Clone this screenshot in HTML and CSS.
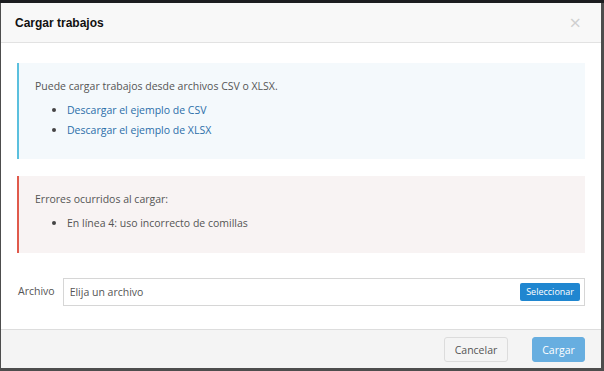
FILE: index.html
```html
<!DOCTYPE html>
<html lang="es">
<head>
  <meta charset="UTF-8">
  <title>Cargar trabajos</title>
  <link rel="stylesheet" href="styles.css">
</head>
<body>
  <div class="modal">
    <div class="modal-header">
      <h4>Cargar trabajos</h4>
      <span class="close">&times;</span>
    </div>

    <div class="modal-body">
      <div class="callout callout-info">
        <p>Puede cargar trabajos desde archivos CSV o XLSX.</p>
        <ul>
          <li><a href="#">Descargar el ejemplo de CSV</a></li>
          <li><a href="#">Descargar el ejemplo de XLSX</a></li>
        </ul>
      </div>

      <div class="callout callout-danger">
        <p>Errores ocurridos al cargar:</p>
        <ul>
          <li>En línea 4: uso incorrecto de comillas</li>
        </ul>
      </div>

      <div class="form-row">
        <label>Archivo</label>
        <div class="file-input">
          <span>Elija un archivo</span>
          <button class="btn-select">Seleccionar</button>
        </div>
      </div>
    </div>

    <div class="modal-footer">
      <button class="btn btn-default">Cancelar</button>
      <button class="btn btn-primary" disabled>Cargar</button>
    </div>
  </div>
</body>
</html>
```

FILE: styles.css
```css
* {
  box-sizing: border-box;
  font-family: 'Open Sans', sans-serif;
}

body {
  margin: 0;
  background: #4d4d4d;
  border-top: 3px solid #1c1d20;
  height: 371px;
  padding: 0 3px 0 1px;
  overflow: hidden;
}

.modal {
  background: white;
  height: 365px;
  display: flex;
  flex-direction: column;
}

.modal-header {
  display: flex;
  justify-content: space-between;
  align-items: center;
  background: #f8f8f8;
  border-bottom: 1px solid #e2e2e2;
  height: 40px;
  padding: 0 20px 0 14px;
}

.modal-header h4 {
  margin: 0;
  font-family: 'Liberation Sans', Arial, sans-serif;
  font-size: 12px;
  font-weight: bold;
  color: #111;
}

.close {
  color: #cfcfcf;
  font-size: 20px;
  line-height: 1;
}

.modal-body {
  flex: 1;
  padding: 20px 16px 0 16px;
}

.callout {
  border-left: 2px solid;
  padding: 15px 16px 15px 16px;
  font-size: 10.5px;
  color: #555;
  margin-bottom: 17px;
}

.callout p {
  margin: 0 0 6px;
  line-height: 16px;
}

.callout ul {
  margin: 0;
  padding-left: 32px;
}

.callout li {
  line-height: 20px;
}

.callout li::marker {
  font-size: 12px;
  color: #444;
}

.callout a {
  color: #2b6ea9;
  text-decoration: none;
}

.callout-info {
  background: #f4f9fc;
  border-color: #5bc0de;
  height: 96px;
}

.callout-danger {
  background: #f8f3f3;
  border-color: #e05a4c;
  height: 77px;
}

.form-row {
  display: flex;
  align-items: center;
  gap: 8px;
  margin-top: 25px;
}

.form-row label {
  font-size: 10.5px;
  color: #555;
  padding-left: 1px;
  margin-top: -3px;
}

.file-input {
  flex: 1;
  display: flex;
  justify-content: space-between;
  align-items: center;
  height: 28px;
  border: 1px solid #d6d6d6;
  padding: 0 4px 0 6px;
  font-size: 10.5px;
  color: #555;
}

.btn-select {
  background: #1f86d0;
  border: none;
  border-radius: 2px;
  color: white;
  font-size: 9px;
  height: 18px;
  padding: 0 6px;
  margin-top: -1px;
}

.modal-footer {
  display: flex;
  justify-content: flex-end;
  gap: 24px;
  background: #f4f4f4;
  border-top: 1px solid #ddd;
  height: 39px;
  padding: 7px 16px 0 0;
}

.btn {
  height: 25px;
  border-radius: 3px;
  font-size: 10.5px;
}

.btn-default {
  background: #f4f4f4;
  border: 1px solid #dcdcdc;
  color: #555;
  width: 64px;
}

.btn-primary {
  background: #67aee0;
  border: 1px solid #67aee0;
  color: white;
  width: 53px;
}
```
